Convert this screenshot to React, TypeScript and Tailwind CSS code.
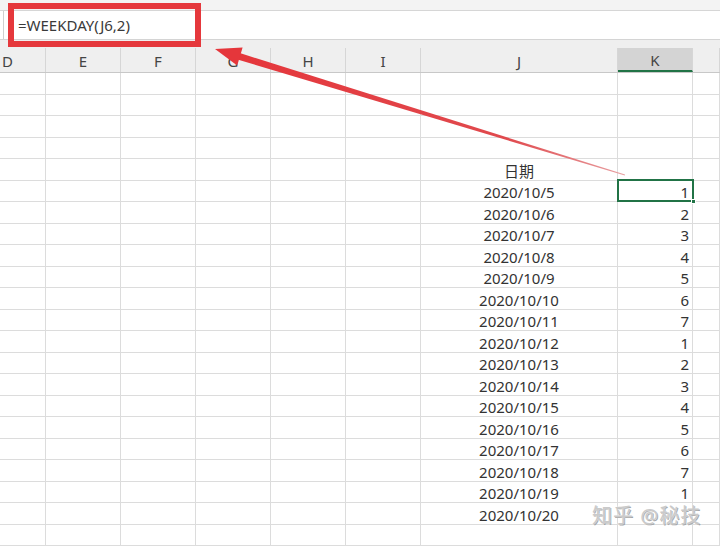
import React from "react";

const cols = [
  { key: "D", w: "w-[46px]" },
  { key: "E", w: "w-[75px]" },
  { key: "F", w: "w-[75px]" },
  { key: "G", w: "w-[75px]" },
  { key: "H", w: "w-[75px]" },
  { key: "I", w: "w-[75px]" },
  { key: "J", w: "w-[197px]" },
  { key: "K", w: "w-[75px]" },
  { key: "L", w: "w-[27px]" },
];

const weekday = [1, 2, 3, 4, 5, 6, 7, 1, 2, 3, 4, 5, 6, 7, 1];

const rows = Array.from({ length: 22 }, (_, i) => {
  const n = i + 1;
  if (n === 5) return { j: "日期", k: "" };
  if (n >= 6 && n <= 20) return { j: `2020/10/${n - 1}`, k: String(weekday[n - 6]) };
  if (n === 21) return { j: "2020/10/20", k: "" };
  return { j: "", k: "" };
});

const Arrow = () => (
  <svg className="absolute left-0 top-0 pointer-events-none" width="720" height="546" viewBox="0 0 720 546">
    <defs>
      <linearGradient id="shaft" x1="235" y1="55" x2="625" y2="175" gradientUnits="userSpaceOnUse">
        <stop offset="0" stopColor="#e5363b" />
        <stop offset="0.7" stopColor="#e04a4e" />
        <stop offset="1" stopColor="#e8a0a2" />
      </linearGradient>
    </defs>
    <polygon points="233.2,58.2 235.2,51.6 625,174.6 624.8,175.4" fill="url(#shaft)" />
    <polygon points="215,49 242.6,47.6 237.2,65.4" fill="#e5363b" />
  </svg>
);

export default function App() {
  return (
    <div
      className="relative w-[720px] h-[546px] overflow-hidden bg-white text-[#333]"
      style={{ fontFamily: '"Noto Sans", "Noto Sans CJK SC", sans-serif' }}
    >
      <div className="h-[11px] bg-[#f3f3f3] border-b border-[#d6d6d6]" />
      <div className="flex h-[29px] bg-white border-b border-[#d4d4d4]">
        <div className="w-[4px] border-r border-[#cfcfcf]" />
        <div className="pl-[14px] flex items-center text-[15px] leading-none text-[#3a3a3a]">=WEEKDAY(J6,2)</div>
      </div>
      <div className="h-[33px] bg-[#efefef] pt-[8px] border-b border-[#c8c8c8]">
        <div className="flex h-[24px]">
          {cols.map((c) => (
            <div
              key={c.key}
              className={`${c.w} shrink-0 flex items-center pt-[3px] text-[15px] text-[#444] border-r border-[#d6d6d6] ${
                c.key === "K" ? "bg-[#d4d4d4] border-b-2 border-b-[#217346]" : ""
              } ${c.key === "D" ? "justify-start pl-[2px]" : "justify-center"}`}
            >
              {c.key === "L" ? "" : c.key}
            </div>
          ))}
        </div>
      </div>
      <div className="flex flex-col">
        {rows.map((r, i) => (
          <div key={i} className="flex h-[21.5px] shrink-0">
            {cols.map((c) => (
              <div
                key={c.key}
                className={`${c.w} shrink-0 border-r border-b border-[#dcdcdc] flex items-end text-[15px] leading-[18px] ${
                  c.key === "J" ? "justify-center" : c.key === "K" ? "justify-end pr-[3px]" : ""
                }`}
              >
                {c.key === "J" ? r.j : c.key === "K" ? r.k : ""}
              </div>
            ))}
          </div>
        ))}
      </div>

      {/* selected cell K6 */}
      <div className="absolute left-[617px] top-[179px] w-[77px] h-[23px] border-2 border-[#217346]" />
      <div className="absolute left-[691px] top-[199px] w-[5px] h-[5px] bg-[#217346] border border-white" />

      {/* annotation */}
      <div className="absolute left-[8px] top-[3px] w-[193px] h-[44px] border-[6px] border-[#e5383c]" />
      <Arrow />

      <div
        className="absolute left-[592px] top-[506px] text-[20px] leading-none text-[#cacaca] tracking-[1px]"
        style={{ textShadow: "0 0 2px #fff, 1px 1px 0 #999" }}
      >
        知乎 @秘技
      </div>
    </div>
  );
}
